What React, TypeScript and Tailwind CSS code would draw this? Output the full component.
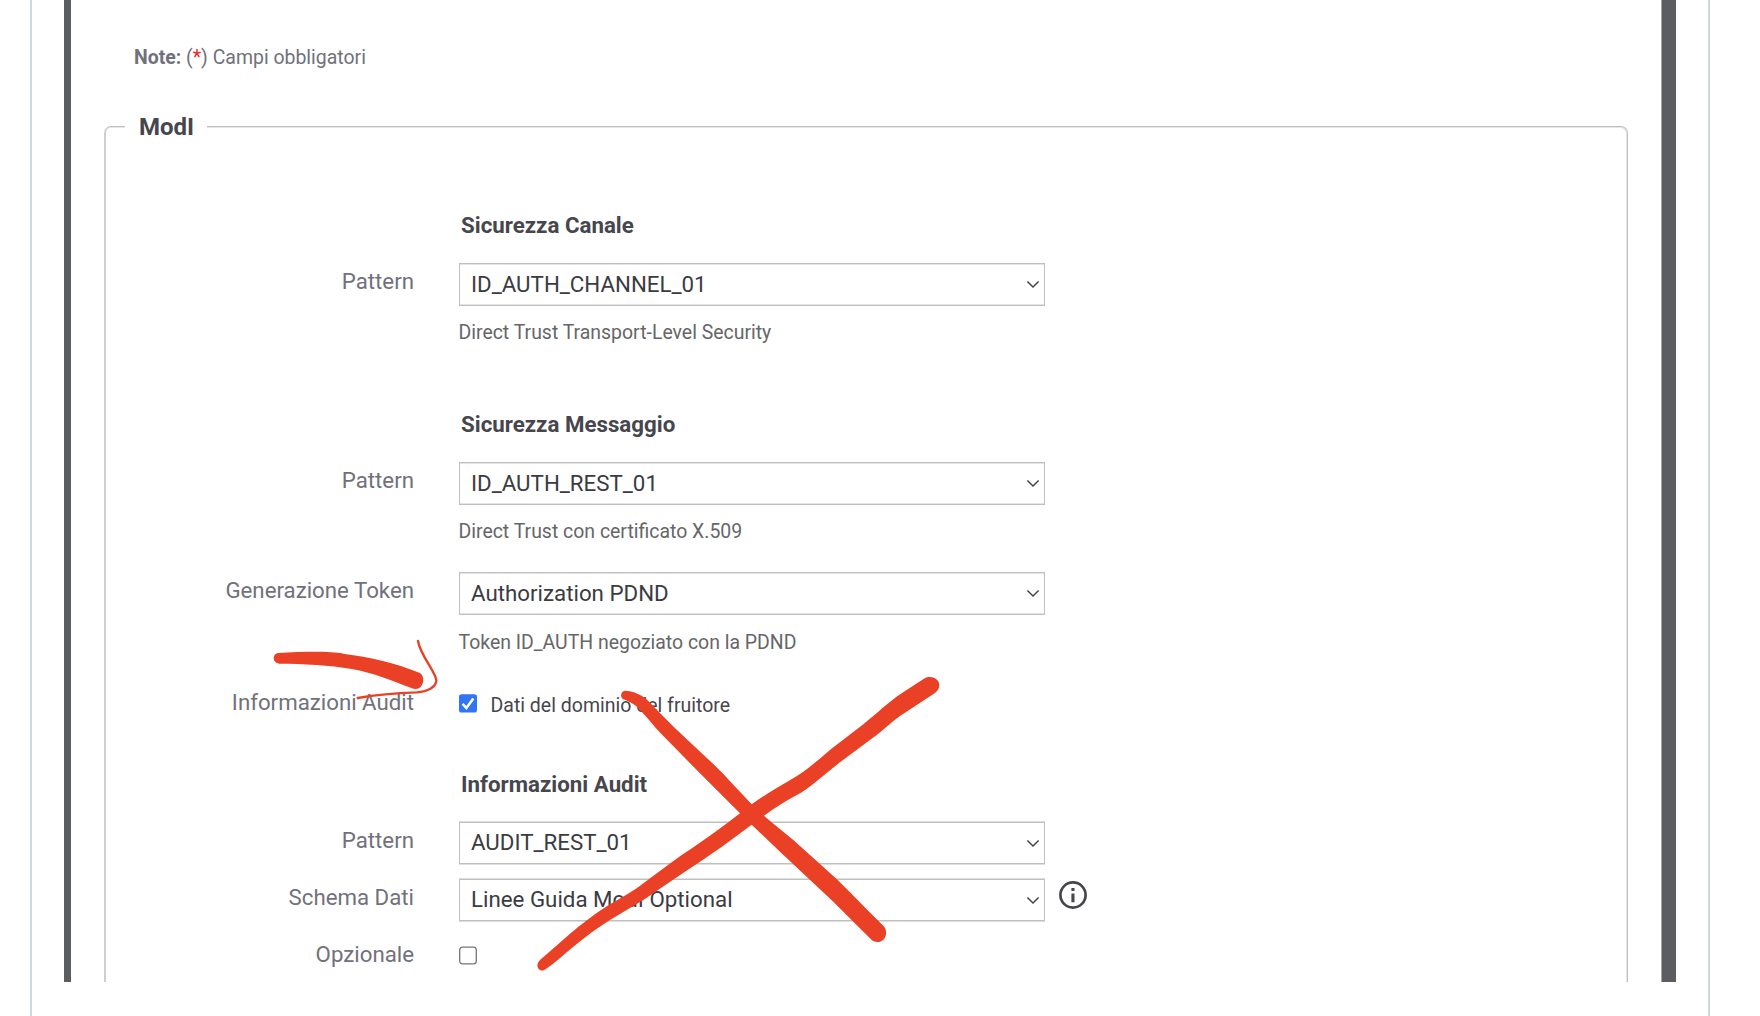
import React from "react";

function Select({ value, outer = false }: { value: string; outer?: boolean }) {
  return (
    <div
      className={
        outer
          ? "flex h-[42px] w-[586px] shrink-0 items-center justify-between border border-[#bfbfbf] bg-white pl-[11px] pr-[4px] shadow-[0_-1px_0_#dfdfdf,0_1px_0_#dfdfdf]"
          : "flex h-[43px] w-[586px] shrink-0 items-center justify-between border border-[#bfbfbf] bg-white pl-[11px] pr-[4px] shadow-[inset_0_1px_0_#e4e4e4,inset_0_-1px_0_#e4e4e4]"
      }
    >
      <span className="pb-[2px] text-[22.3px] leading-[26px] text-[#3b3b42]">{value}</span>
      <svg className="h-[9px] w-[14px]" viewBox="0 0 14 9" fill="none">
        <path d="M1.4 1.4 7 7.1l5.6-5.7" stroke="#404044" strokeWidth="1.4" />
      </svg>
    </div>
  );
}

function Label({ children, className = "" }: { children?: React.ReactNode; className?: string }) {
  return (
    <div className={"w-[289px] shrink-0 text-right text-[22.25px] leading-[26px] text-[#71717c] " + className}>
      {children}
    </div>
  );
}

function Heading({ children, className }: { children: React.ReactNode; className: string }) {
  return (
    <h3 className={"pl-[336px] text-[22.3px] font-bold leading-[26px] text-[#46464d] " + className}>{children}</h3>
  );
}

function Hint({ children, className }: { children: React.ReactNode; className: string }) {
  return <p className={"pl-[333.5px] text-[19.45px] leading-[24px] text-[#666668] " + className}>{children}</p>;
}

function Checkbox({ checked = false }: { checked?: boolean }) {
  return (
    <svg className="mt-[5px] h-[19px] w-[18px] shrink-0" viewBox="0 0 18 19">
      {checked ? (
        <>
          <rect x="0" y="0.3" width="18" height="18.2" rx="2.6" fill="#3174f6" />
          <path d="M3.6 9.9 7.4 14 14.3 4.4" fill="none" stroke="#fff" strokeWidth="2.5" />
        </>
      ) : (
        <rect x="0.7" y="1.1" width="16.6" height="16.8" rx="2.8" fill="#fff" stroke="#767676" strokeWidth="1.3" />
      )}
    </svg>
  );
}

function InfoIcon() {
  return (
    <svg className="ml-[14px] mt-[2px] h-[28px] w-[28px]" viewBox="0 0 28 28">
      <circle cx="14" cy="14" r="12.6" fill="none" stroke="#46464d" strokeWidth="2.7" />
      <path d="M12.4 7h3.1v3h-3.1zM12.4 12.6h3.1v8.6h-3.1z" fill="#46464d" />
    </svg>
  );
}

function Markup() {
  return (
    <svg className="pointer-events-none absolute left-0 top-0 h-[1016px] w-[1760px]" viewBox="0 0 1760 1016">
      <g transform="translate(220 620) scale(0.33333)" fill="#ea4025">
        <path d="M175 99C250 95 330 93 370 101C450 111 530 130 598 158C612 164 612 185 606 195C600 207 588 209 576 205C510 180 460 158 395 147C330 135 250 131 178 131C156 129 156 101 175 99Z" />
        <path
          d="M594 63C600 105 650 160 649 182C648 200 625 215 590 217C530 219 470 224 413 234"
          fill="none"
          stroke="#ea4025"
          strokeWidth="7"
          strokeLinecap="round"
        />
      </g>
      <g transform="translate(600 640) scale(0.33333)" fill="#ea4025">
        <path d="M75 152C98 152 124 164 142 180L185 224C235 276 289 323 340 372C380 411 416 452 455 493C467 505 480 516 492 527C521 552 551 575 580 600L680 690C725 729 762 769 800 808L850 857C860 867 861 884 853 896C843 908 828 909 816 901C796 881 780 864 760 845L700 785L620 710L540 635L455 554L420 520L300 400L185 283C163 260 146 237 125 215C108 196 93 186 70 178C59 172 62 153 75 152Z" />
        <path d="M974 115L905 160C866 186 831 220 790 253L710 314C677 339 645 370 610 395C582 415 550 431 520 450C499 463 475 478 455 493L420 520C393 541 367 561 340 580C299 609 257 637 215 667L110 745C74 770 36 787 0 812C-36 837 -66 860 -100 890L-180 960C-196 976 -185 995 -168 991C-137 971 -111 945 -80 920C-43 890 -9 864 30 840L130 780C189 740 247 700 308 660L370 617L455 554C467 545 480 535 492 527C511 513 530 500 550 488C573 474 598 463 620 447C654 423 686 393 720 367L830 285C854 266 876 245 900 228L1005 159C1017 150 1021 137 1015 124C1006 110 986 108 974 115Z" />
      </g>
    </svg>
  );
}

export default function App() {
  return (
    <div className="relative h-[1016px] w-[1760px] overflow-hidden bg-white font-[Roboto,sans-serif]">
      <div className="ml-[30px] h-full w-[1680px] border-x-2 border-[#d2d6de]">
        <div className="ml-[32px] flex h-[982px] w-[1612px] overflow-hidden border-l-[7px] border-r-[14px] border-[#5c5d61]">
          <div className="flex-1 border-r border-[#a5a5a8]">
            <p className="ml-[63px] mt-[46px] text-[19.45px] leading-[24px] text-[#71717c]">
              <b>Note:</b> (<span className="text-[#f0241c]">*</span>) Campi obbligatori
            </p>
            <fieldset className="ml-[33px] mt-[44px] h-[1000px] w-[1524px] rounded-[7px] border border-l-2 border-[#bfbfbf] border-l-[#cecece] pl-[19px] shadow-[inset_-1px_1px_0_#e6e6e6]">
              <legend className="w-[82px] bg-white pl-[14px] pt-px text-[24px] font-bold leading-[24px] text-[#46464d]">
                ModI
              </legend>

              <Heading className="mt-[73px]">Sicurezza Canale</Heading>
              <div className="mt-[25px] flex gap-[45px]">
                <Label className="pt-[5px]">Pattern</Label>
                <Select value="ID_AUTH_CHANNEL_01" />
              </div>
              <Hint className="mt-[15px]">Direct Trust Transport-Level Security</Hint>

              <Heading className="mt-[66px]">Sicurezza Messaggio</Heading>
              <div className="mt-[25px] flex gap-[45px]">
                <Label className="pt-[5px]">Pattern</Label>
                <Select value="ID_AUTH_REST_01" />
              </div>
              <Hint className="mt-[15px]">Direct Trust con certificato X.509</Hint>
              <div className="mt-[28px] flex gap-[45px]">
                <Label className="pt-[5px]">Generazione Token</Label>
                <Select value="Authorization PDND" />
              </div>
              <Hint className="mt-[16px]">Token ID_AUTH negoziato con la PDND</Hint>
              <div className="mt-[34px] flex h-[26px] gap-[45px]">
                <Label>Informazioni Audit</Label>
                <div className="flex">
                  <Checkbox checked />
                  <span className="ml-[13.5px] mt-[5px] text-[19.5px] leading-[24px] text-[#46464d]">
                    Dati del dominio del fruitore
                  </span>
                </div>
              </div>

              <Heading className="mt-[56px]">Informazioni Audit</Heading>
              <div className="mt-[25px] flex gap-[45px]">
                <Label className="pt-[5px]">Pattern</Label>
                <Select value="AUDIT_REST_01" outer />
              </div>
              <div className="mt-[15px] flex">
                <Label className="mr-[45px] pt-[5px]">Schema Dati</Label>
                <Select value="Linee Guida ModI Optional" outer />
                <InfoIcon />
              </div>
              <div className="mt-[20px] flex gap-[45px]">
                <Label>Opzionale</Label>
                <Checkbox />
              </div>
            </fieldset>
          </div>
        </div>
      </div>
      <Markup />
    </div>
  );
}
